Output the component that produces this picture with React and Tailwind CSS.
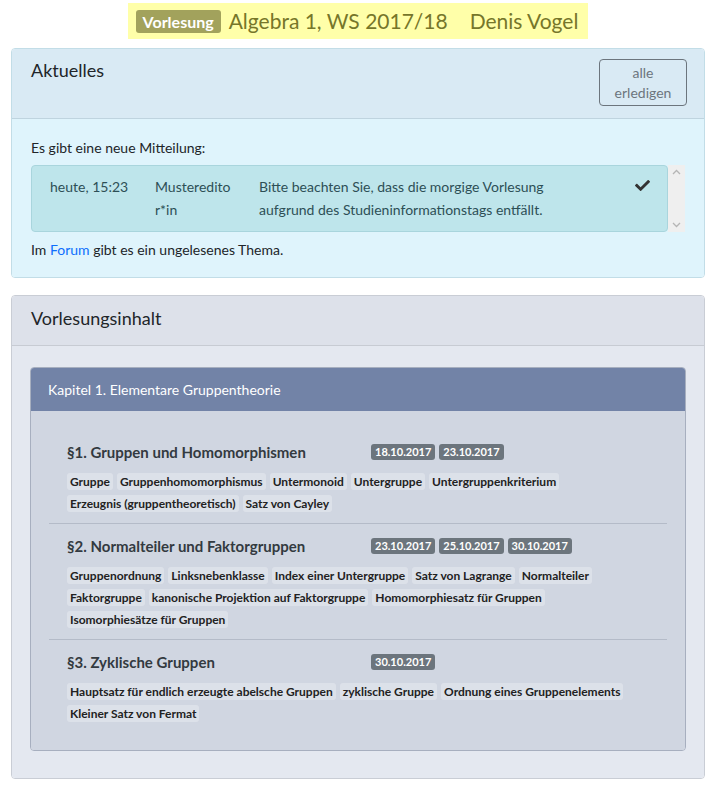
import React from "react";
import { FaCheck } from "react-icons/fa";

const sections = [
  {
    title: "§1. Gruppen und Homomorphismen",
    dates: ["18.10.2017", "23.10.2017"],
    tags: [
      "Gruppe",
      "Gruppenhomomorphismus",
      "Untermonoid",
      "Untergruppe",
      "Untergruppenkriterium",
      "Erzeugnis (gruppentheoretisch)",
      "Satz von Cayley",
    ],
  },
  {
    title: "§2. Normalteiler und Faktorgruppen",
    dates: ["23.10.2017", "25.10.2017", "30.10.2017"],
    tags: [
      "Gruppenordnung",
      "Linksnebenklasse",
      "Index einer Untergruppe",
      "Satz von Lagrange",
      "Normalteiler",
      "Faktorgruppe",
      "kanonische Projektion auf Faktorgruppe",
      "Homomorphiesatz für Gruppen",
      "Isomorphiesätze für Gruppen",
    ],
  },
  {
    title: "§3. Zyklische Gruppen",
    dates: ["30.10.2017"],
    tags: [
      "Hauptsatz für endlich erzeugte abelsche Gruppen",
      "zyklische Gruppe",
      "Ordnung eines Gruppenelements",
      "Kleiner Satz von Fermat",
    ],
  },
];

function Section({ s, first, last }) {
  return (
    <div className={"px-[18px] pb-[11px] " + (first ? "pt-[8px] " : "pt-[7px] ") + (last ? "" : "border-b border-[#b4bbc8]")}>
      <div className="flex items-center h-[30px]">
        <div className="w-[304px] text-[15px] font-bold text-[#333a40]">{s.title}</div>
        <div className="flex gap-[4px]">
          {s.dates.map((d) => (
            <span key={d} className="bg-[#6c757d] text-white text-[11px] font-bold rounded-[3px] px-[4px] h-[16px] leading-[16px]">
              {d}
            </span>
          ))}
        </div>
      </div>
      <div className="flex flex-wrap gap-x-[4px] gap-y-[5px] pt-[6px]">
        {s.tags.map((t) => (
          <span key={t} className="bg-[#dce1e9] text-[#222] text-[12px] font-bold rounded-[3px] px-[3px] h-[17px] leading-[17px]">
            {t}
          </span>
        ))}
      </div>
    </div>
  );
}

export default function App() {
  return (
    <div className="min-h-[790px] bg-white text-[14px] text-[#212529]" style={{ fontFamily: "'Segoe UI', Lato, 'Noto Sans', sans-serif" }}>
      <div className="flex justify-center pt-[3px]">
        <div className="bg-[#ffffa9] h-[36px] pl-[8px] pr-[10px] flex items-center text-[21px] text-[#76762a]">
          <span className="bg-[#a2a25c] text-white font-bold text-[16px] rounded-[3px] px-[7px] h-[23px] leading-[23px]">Vorlesung</span>
          <span className="ml-[8px]">Algebra 1, WS 2017/18</span>
          <span className="ml-[22px]">Denis Vogel</span>
        </div>
      </div>

      <div className="mx-[11px] mt-[9px] border border-[#c2dde7] rounded-[4px] overflow-hidden">
        <div className="bg-[#d9eaf4] h-[70px] border-b border-[#bfd4df] flex justify-between px-[19px] pt-[11px]">
          <div className="text-[18px] text-[#212529] -mt-[3px]">Aktuelles</div>
          <button className="w-[88px] h-[47px] border border-[#6c757d] rounded-[4px] text-[#6c757d] text-[14px] leading-[20px] -mr-[2px] -mt-[1px]">
            alle
            <br />
            erledigen
          </button>
        </div>
        <div className="bg-[#dff4fc] px-[19px] pt-[18px] pb-[17px]">
          <div className="mb-[7px]">Es gibt eine neue Mitteilung:</div>
          <div className="flex h-[67px]">
            <div className="flex-1 bg-[#bee5eb] border border-[#a9d5dd] rounded-[4px] flex pl-[18px] pr-[17px] py-[9px] text-[#2d4f56] leading-[23px]">
              <div className="w-[105px]">heute, 15:23</div>
              <div className="w-[104px] pr-[24px] break-all">Mustereditor*in</div>
              <div className="flex-1">
                Bitte beachten Sie, dass die morgige Vorlesung
                <br />
                aufgrund des Studieninformationstags entfällt.
              </div>
              <div className="pt-[3px] text-[#333]">
                <FaCheck size={15} />
              </div>
            </div>
            <div className="w-[17px] bg-[#efefef] flex flex-col justify-between items-center py-[4px] text-[#b5b5b5]">
              <svg width="9" height="6" viewBox="0 0 9 6"><path d="M1 5 L4.5 1.5 L8 5" fill="none" stroke="currentColor" strokeWidth="1.3" /></svg>
              <svg width="9" height="6" viewBox="0 0 9 6"><path d="M1 1 L4.5 4.5 L8 1" fill="none" stroke="currentColor" strokeWidth="1.3" /></svg>
            </div>
          </div>
          <div className="mt-[7px]">
            Im <span className="text-[#0d6efd]">Forum</span> gibt es ein ungelesenes Thema.
          </div>
        </div>
      </div>

      <div className="mx-[11px] mt-[17px] border border-[#c9cdd5] rounded-[4px] overflow-hidden">
        <div className="bg-[#dde1ea] h-[50px] border-b border-[#c7cbd3] px-[19px] flex items-center pb-[4px]">
          <div className="text-[18px] text-[#212529]">Vorlesungsinhalt</div>
        </div>
        <div className="bg-[#e4e8f0] px-[18px] pt-[21px] pb-[27px]">
          <div className="border border-[#a7afbf] rounded-[4px] overflow-hidden">
            <div className="bg-[#7283a7] h-[43px] px-[17px] flex items-center text-white text-[14px]">
              Kapitel 1. Elementare Gruppentheorie
            </div>
            <div className="bg-[#d0d6e1] px-[18px] pt-[18px] pb-[17px]">
              {sections.map((s, i) => (
                <Section key={i} s={s} first={i === 0} last={i === sections.length - 1} />
              ))}
            </div>
          </div>
        </div>
      </div>
    </div>
  );
}
